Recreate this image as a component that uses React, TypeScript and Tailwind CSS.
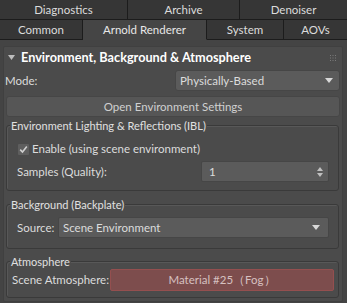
import React from 'react';

const font = { fontFamily: 'Lato, "Liberation Sans", sans-serif' };

function Tab({ label, w, active, last }: { label: string; w: string; active?: boolean; last?: boolean }) {
    return (
        <div
            className={`${w} h-[20px] flex items-center justify-center border-r border-b border-[#1c1c1c] text-[11.5px] ${
                active ? 'bg-[#454545] text-[#e8e8e8] border-b-[#454545]' : 'bg-[#363636] text-[#dcdcdc]'
            } ${last ? 'border-r-0 flex-1' : ''}`}
        >
            {label}
        </div>
    );
}

function Caret() {
    return (
        <svg width="8" height="5" viewBox="0 0 8 5" className="shrink-0">
            <path d="M0 0 H8 L4 5 Z" fill="#d8d8d8" />
        </svg>
    );
}

function Group({ title, className, children }: { title: string; className: string; children: React.ReactNode }) {
    return (
        <div className={`relative ml-[2px] mr-[3px] border border-[#3a3a3a] rounded-[3px] shadow-[inset_1px_1px_0_#585858] ${className}`}>
            <span className="absolute -top-[7px] left-[3px] px-[1px] bg-[#4b4b4b] text-[11px] leading-[14px] text-[#e0e0e0] whitespace-nowrap">
                {title}
            </span>
            {children}
        </div>
    );
}

export default function App() {
    return (
        <div className="w-[347px] h-[303px] bg-[#444444] text-[#dcdcdc] overflow-hidden" style={font}>
            <div className="flex">
                <Tab label="Diagnostics" w="w-[128px]" />
                <Tab label="Archive" w="w-[112px]" />
                <Tab label="Denoiser" w="w-[107px]" last />
            </div>
            <div className="flex">
                <Tab label="Common" w="w-[83px]" />
                <Tab label="Arnold Renderer" w="w-[124px]" active />
                <Tab label="System" w="w-[77px]" />
                <Tab label="AOVs" w="w-[63px]" last />
            </div>

            <div className="ml-[3px] mr-[4px] mt-[6px] bg-[#4b4b4b] rounded-[2px] border border-[#404040] pb-[3px]">
                <div className="flex items-center h-[21px] px-[4px]">
                    <svg width="7" height="5" viewBox="0 0 7 5" className="mr-[6px]">
                        <path d="M0 0 H7 L3.5 5 Z" fill="#bdbdbd" />
                    </svg>
                    <span className="font-bold text-[12.7px] text-white flex-1">Environment, Background &amp; Atmosphere</span>
                    <svg width="6" height="6" viewBox="0 0 6 6" className="mr-[2px]">
                        {[0, 2.5, 5].map((x) =>
                            [0, 2.5, 5].map((y) => <rect key={`${x}-${y}`} x={x} y={y} width="1" height="1" fill="#7a7a7a" />)
                        )}
                    </svg>
                </div>

                <div className="flex items-center mt-[2px] pl-[1px] pr-[2px]">
                    <span className="text-[11.5px] flex-1">Mode:</span>
                    <div className="w-[165px] h-[21px] bg-[#5b5b5b] border border-[#464646] rounded-[3px] flex items-center justify-between pl-[4px] pr-[6px] text-[11.5px]">
                        <span>Physically-Based</span>
                        <Caret />
                    </div>
                </div>

                <div className="mx-[2px] mt-[5px] h-[21px] bg-[#565656] border border-[#464646] rounded-[3px] flex items-center justify-center text-[11.5px] text-[#d0d0d0]">
                    Open Environment Settings
                </div>

                <Group title="Environment Lighting & Reflections (IBL)" className="mt-[8px] pt-[15px] pb-[8px]">
                    <div className="flex items-center pl-[11px] h-[16px]">
                        <svg width="11" height="11" viewBox="0 0 11 11" className="mr-[3px]">
                            <rect x="0" y="0" width="11" height="11" rx="1" fill="#5e5e5e" />
                            <path d="M2.2 5.6 L4.5 8 L8.8 2.6" stroke="#d0d0d0" strokeWidth="1.6" fill="none" />
                        </svg>
                        <span className="text-[11.5px]">Enable (using scene environment)</span>
                    </div>
                    <div className="flex items-center pl-[10px] mt-[4px] pr-[9px]">
                        <span className="text-[11.5px] flex-1">Samples (Quality):</span>
                        <div className="w-[128px] h-[21px] bg-[#5b5b5b] border border-[#464646] rounded-[2px] flex items-center justify-between pl-[7px] pr-[5px] text-[11.5px]">
                            <span>1</span>
                            <svg width="6" height="10" viewBox="0 0 6 10">
                                <path d="M0 4 L3 0 L6 4 Z M0 6 L3 10 L6 6 Z" fill="#c0c0c0" />
                            </svg>
                        </div>
                    </div>
                </Group>

                <Group title="Background (Backplate)" className="mt-[13px] pt-[12px] pb-[10px]">
                    <div className="flex items-center pl-[10px] pr-[9px]">
                        <span className="text-[11.5px] w-[41px] shrink-0">Source:</span>
                        <div className="flex-1 h-[21px] bg-[#5b5b5b] border border-[#464646] rounded-[2px] flex items-center justify-between pl-[4px] pr-[8px] text-[11.5px]">
                            <span>Scene Environment</span>
                            <Caret />
                        </div>
                    </div>
                </Group>

                <Group title="Atmosphere" className="mt-[12px] pt-[7px] pb-[6px]">
                    <div className="flex items-center pl-[5px] pr-[4px]">
                        <span className="text-[11.5px] w-[98px] shrink-0 whitespace-nowrap">Scene Atmosphere:</span>
                        <div className="flex-1 h-[22px] bg-[#7d4d4d] border border-[#944f4f] rounded-[2px] flex items-center justify-center text-[11.5px] text-[#d6c0c0]">
                            Material #25（Fog）
                        </div>
                    </div>
                </Group>
            </div>
        </div>
    );
}
